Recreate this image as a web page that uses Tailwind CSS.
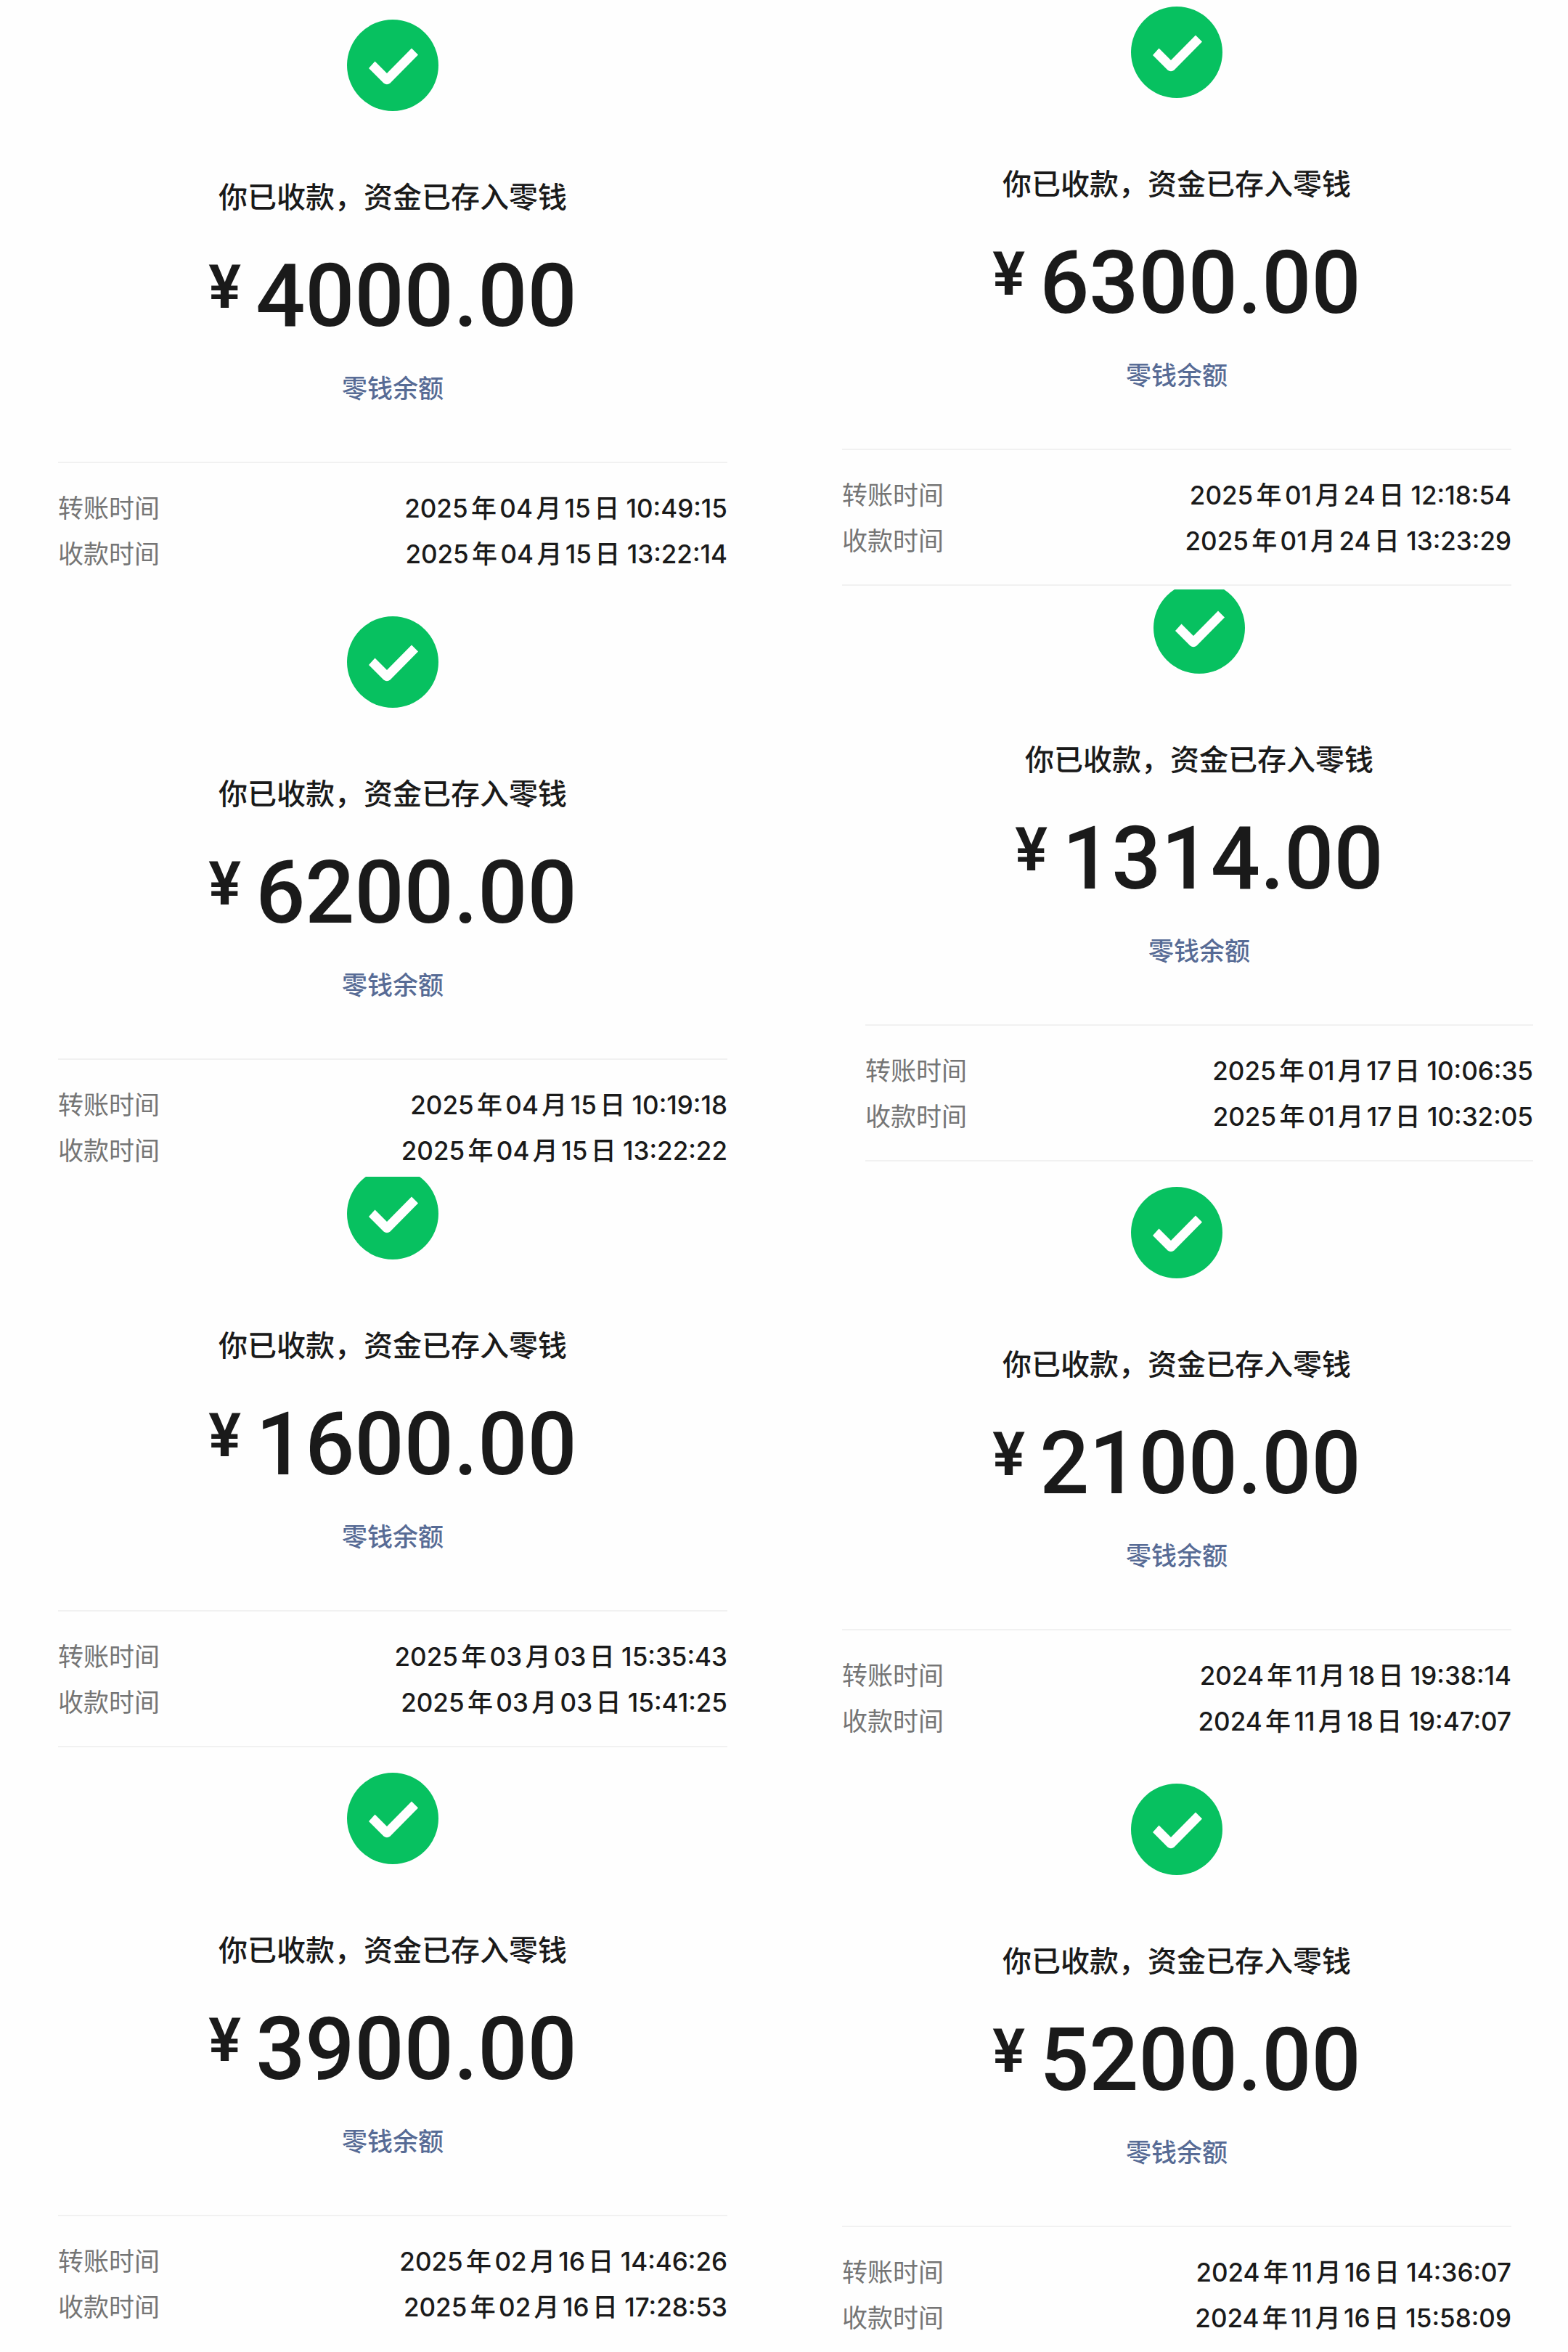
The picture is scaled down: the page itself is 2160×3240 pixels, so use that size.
<!DOCTYPE html>
<html lang="zh-CN">
<head>
    <meta charset="UTF-8">
    <meta name="viewport" content="width=device-width, initial-scale=1.0">
    <title>收款记录</title>
    <script src="https://cdn.jsdelivr.net/npm/@tailwindcss/browser@4"></script>
</head>
<body class="min-h-screen bg-[#fefefe] text-[#1a1a1a] font-['Inter','Noto_Sans_CJK_SC',sans-serif] [text-autospace:normal]">
    <svg class="hidden" xmlns="http://www.w3.org/2000/svg">
        <symbol id="icon-done" viewBox="0 0 126 126">
            <circle cx="63" cy="63" r="63" fill="#07c160"/>
            <path fill="#fff" d="M30 67L38.500 57.500L55 74L89 39.500L98 48.500L59.500 87.500Q55 91 50.500 87.500Z"/>
        </symbol>
    </svg>
    <main class="grid grid-cols-2 items-start">
        <!-- left column -->
        <div>
            <section class="pt-[27px] pl-20 pr-[78px] flex flex-col items-center">
                <svg class="w-[126px] h-[126px]"><use href="#icon-done"/></svg>
                <h2 class="mt-[91px] text-[40px] leading-14 font-medium">你已收款，资金已存入零钱</h2>
                <p class="mt-11 flex items-start gap-5 font-medium font-['Roboto',sans-serif]">
                    <span class="text-[84px] leading-[104px] font-semibold">¥</span>
                    <span class="text-[120px] leading-32">4000.00</span>
                </p>
                <a href="#" class="mt-[37px] text-[35px] leading-[52px] font-medium text-[#576b95]">零钱余额</a>
                <dl class="mt-[75px] w-full border-t-2 border-[#f1f1f1] pt-[31px] text-[35px] leading-[63px]">
                    <div class="flex justify-between"><dt class="text-[#757575]">转账时间</dt><dd class="font-medium">2025年04月15日 10:49:15</dd></div>
                    <div class="flex justify-between"><dt class="text-[#757575]">收款时间</dt><dd class="font-medium">2025年04月15日 13:22:14</dd></div>
                </dl>
            </section>
            <section class="pt-[54px] pl-20 pr-[78px] flex flex-col items-center">
                <svg class="w-[126px] h-[126px]"><use href="#icon-done"/></svg>
                <h2 class="mt-[91px] text-[40px] leading-14 font-medium">你已收款，资金已存入零钱</h2>
                <p class="mt-11 flex items-start gap-5 font-medium font-['Roboto',sans-serif]">
                    <span class="text-[84px] leading-[104px] font-semibold">¥</span>
                    <span class="text-[120px] leading-32">6200.00</span>
                </p>
                <a href="#" class="mt-[37px] text-[35px] leading-[52px] font-medium text-[#576b95]">零钱余额</a>
                <dl class="mt-[75px] w-full border-t-2 border-[#f1f1f1] pt-[31px] text-[35px] leading-[63px]">
                    <div class="flex justify-between"><dt class="text-[#757575]">转账时间</dt><dd class="font-medium">2025年04月15日 10:19:18</dd></div>
                    <div class="flex justify-between"><dt class="text-[#757575]">收款时间</dt><dd class="font-medium">2025年04月15日 13:22:22</dd></div>
                </dl>
            </section>
            <section class="mt-1 pl-20 pr-[78px] flex flex-col items-center overflow-hidden">
                <svg class="-mt-3 w-[126px] h-[126px]"><use href="#icon-done"/></svg>
                <h2 class="mt-[91px] text-[40px] leading-14 font-medium">你已收款，资金已存入零钱</h2>
                <p class="mt-11 flex items-start gap-5 font-medium font-['Roboto',sans-serif]">
                    <span class="text-[84px] leading-[104px] font-semibold">¥</span>
                    <span class="text-[120px] leading-32">1600.00</span>
                </p>
                <a href="#" class="mt-[37px] text-[35px] leading-[52px] font-medium text-[#576b95]">零钱余额</a>
                <dl class="mt-[75px] w-full border-y-2 border-[#f1f1f1] pt-[31px] pb-7 text-[35px] leading-[63px]">
                    <div class="flex justify-between"><dt class="text-[#757575]">转账时间</dt><dd class="font-medium">2025年03月03日 15:35:43</dd></div>
                    <div class="flex justify-between"><dt class="text-[#757575]">收款时间</dt><dd class="font-medium">2025年03月03日 15:41:25</dd></div>
                </dl>
            </section>
            <section class="pt-[35px] pl-20 pr-[78px] flex flex-col items-center">
                <svg class="w-[126px] h-[126px]"><use href="#icon-done"/></svg>
                <h2 class="mt-[91px] text-[40px] leading-14 font-medium">你已收款，资金已存入零钱</h2>
                <p class="mt-11 flex items-start gap-5 font-medium font-['Roboto',sans-serif]">
                    <span class="text-[84px] leading-[104px] font-semibold">¥</span>
                    <span class="text-[120px] leading-32">3900.00</span>
                </p>
                <a href="#" class="mt-[37px] text-[35px] leading-[52px] font-medium text-[#576b95]">零钱余额</a>
                <dl class="mt-[75px] w-full border-t-2 border-[#f1f1f1] pt-[31px] text-[35px] leading-[63px]">
                    <div class="flex justify-between"><dt class="text-[#757575]">转账时间</dt><dd class="font-medium">2025年02月16日 14:46:26</dd></div>
                    <div class="flex justify-between"><dt class="text-[#757575]">收款时间</dt><dd class="font-medium">2025年02月16日 17:28:53</dd></div>
                </dl>
            </section>
        </div>
        <!-- right column -->
        <div>
            <section class="pt-[9px] pl-20 pr-[78px] flex flex-col items-center">
                <svg class="w-[126px] h-[126px]"><use href="#icon-done"/></svg>
                <h2 class="mt-[91px] text-[40px] leading-14 font-medium">你已收款，资金已存入零钱</h2>
                <p class="mt-11 flex items-start gap-5 font-medium font-['Roboto',sans-serif]">
                    <span class="text-[84px] leading-[104px] font-semibold">¥</span>
                    <span class="text-[120px] leading-32">6300.00</span>
                </p>
                <a href="#" class="mt-[37px] text-[35px] leading-[52px] font-medium text-[#576b95]">零钱余额</a>
                <dl class="mt-[75px] w-full border-y-2 border-[#f1f1f1] pt-[31px] pb-7 text-[35px] leading-[63px]">
                    <div class="flex justify-between"><dt class="text-[#757575]">转账时间</dt><dd class="font-medium">2025年01月24日 12:18:54</dd></div>
                    <div class="flex justify-between"><dt class="text-[#757575]">收款时间</dt><dd class="font-medium">2025年01月24日 13:23:29</dd></div>
                </dl>
            </section>
            <section class="mt-[5px] pl-28 pr-[48px] flex flex-col items-center overflow-hidden">
                <svg class="-mt-[10px] w-[126px] h-[126px]"><use href="#icon-done"/></svg>
                <h2 class="mt-[91px] text-[40px] leading-14 font-medium">你已收款，资金已存入零钱</h2>
                <p class="mt-11 flex items-start gap-5 font-medium font-['Roboto',sans-serif]">
                    <span class="text-[84px] leading-[104px] font-semibold">¥</span>
                    <span class="text-[120px] leading-32">1314.00</span>
                </p>
                <a href="#" class="mt-[37px] text-[35px] leading-[52px] font-medium text-[#576b95]">零钱余额</a>
                <dl class="mt-[75px] w-full border-y-2 border-[#f1f1f1] pt-[31px] pb-7 text-[35px] leading-[63px]">
                    <div class="flex justify-between"><dt class="text-[#757575]">转账时间</dt><dd class="font-medium">2025年01月17日 10:06:35</dd></div>
                    <div class="flex justify-between"><dt class="text-[#757575]">收款时间</dt><dd class="font-medium">2025年01月17日 10:32:05</dd></div>
                </dl>
            </section>
            <section class="pt-[35px] pl-20 pr-[78px] flex flex-col items-center">
                <svg class="w-[126px] h-[126px]"><use href="#icon-done"/></svg>
                <h2 class="mt-[91px] text-[40px] leading-14 font-medium">你已收款，资金已存入零钱</h2>
                <p class="mt-11 flex items-start gap-5 font-medium font-['Roboto',sans-serif]">
                    <span class="text-[84px] leading-[104px] font-semibold">¥</span>
                    <span class="text-[120px] leading-32">2100.00</span>
                </p>
                <a href="#" class="mt-[37px] text-[35px] leading-[52px] font-medium text-[#576b95]">零钱余额</a>
                <dl class="mt-[75px] w-full border-t-2 border-[#f1f1f1] pt-[31px] text-[35px] leading-[63px]">
                    <div class="flex justify-between"><dt class="text-[#757575]">转账时间</dt><dd class="font-medium">2024年11月18日 19:38:14</dd></div>
                    <div class="flex justify-between"><dt class="text-[#757575]">收款时间</dt><dd class="font-medium">2024年11月18日 19:47:07</dd></div>
                </dl>
            </section>
            <section class="pt-[54px] pl-20 pr-[78px] flex flex-col items-center">
                <svg class="w-[126px] h-[126px]"><use href="#icon-done"/></svg>
                <h2 class="mt-[91px] text-[40px] leading-14 font-medium">你已收款，资金已存入零钱</h2>
                <p class="mt-11 flex items-start gap-5 font-medium font-['Roboto',sans-serif]">
                    <span class="text-[84px] leading-[104px] font-semibold">¥</span>
                    <span class="text-[120px] leading-32">5200.00</span>
                </p>
                <a href="#" class="mt-[37px] text-[35px] leading-[52px] font-medium text-[#576b95]">零钱余额</a>
                <dl class="mt-[75px] w-full border-t-2 border-[#f1f1f1] pt-[31px] text-[35px] leading-[63px]">
                    <div class="flex justify-between"><dt class="text-[#757575]">转账时间</dt><dd class="font-medium">2024年11月16日 14:36:07</dd></div>
                    <div class="flex justify-between"><dt class="text-[#757575]">收款时间</dt><dd class="font-medium">2024年11月16日 15:58:09</dd></div>
                </dl>
            </section>
        </div>
    </main>
</body>
</html>
